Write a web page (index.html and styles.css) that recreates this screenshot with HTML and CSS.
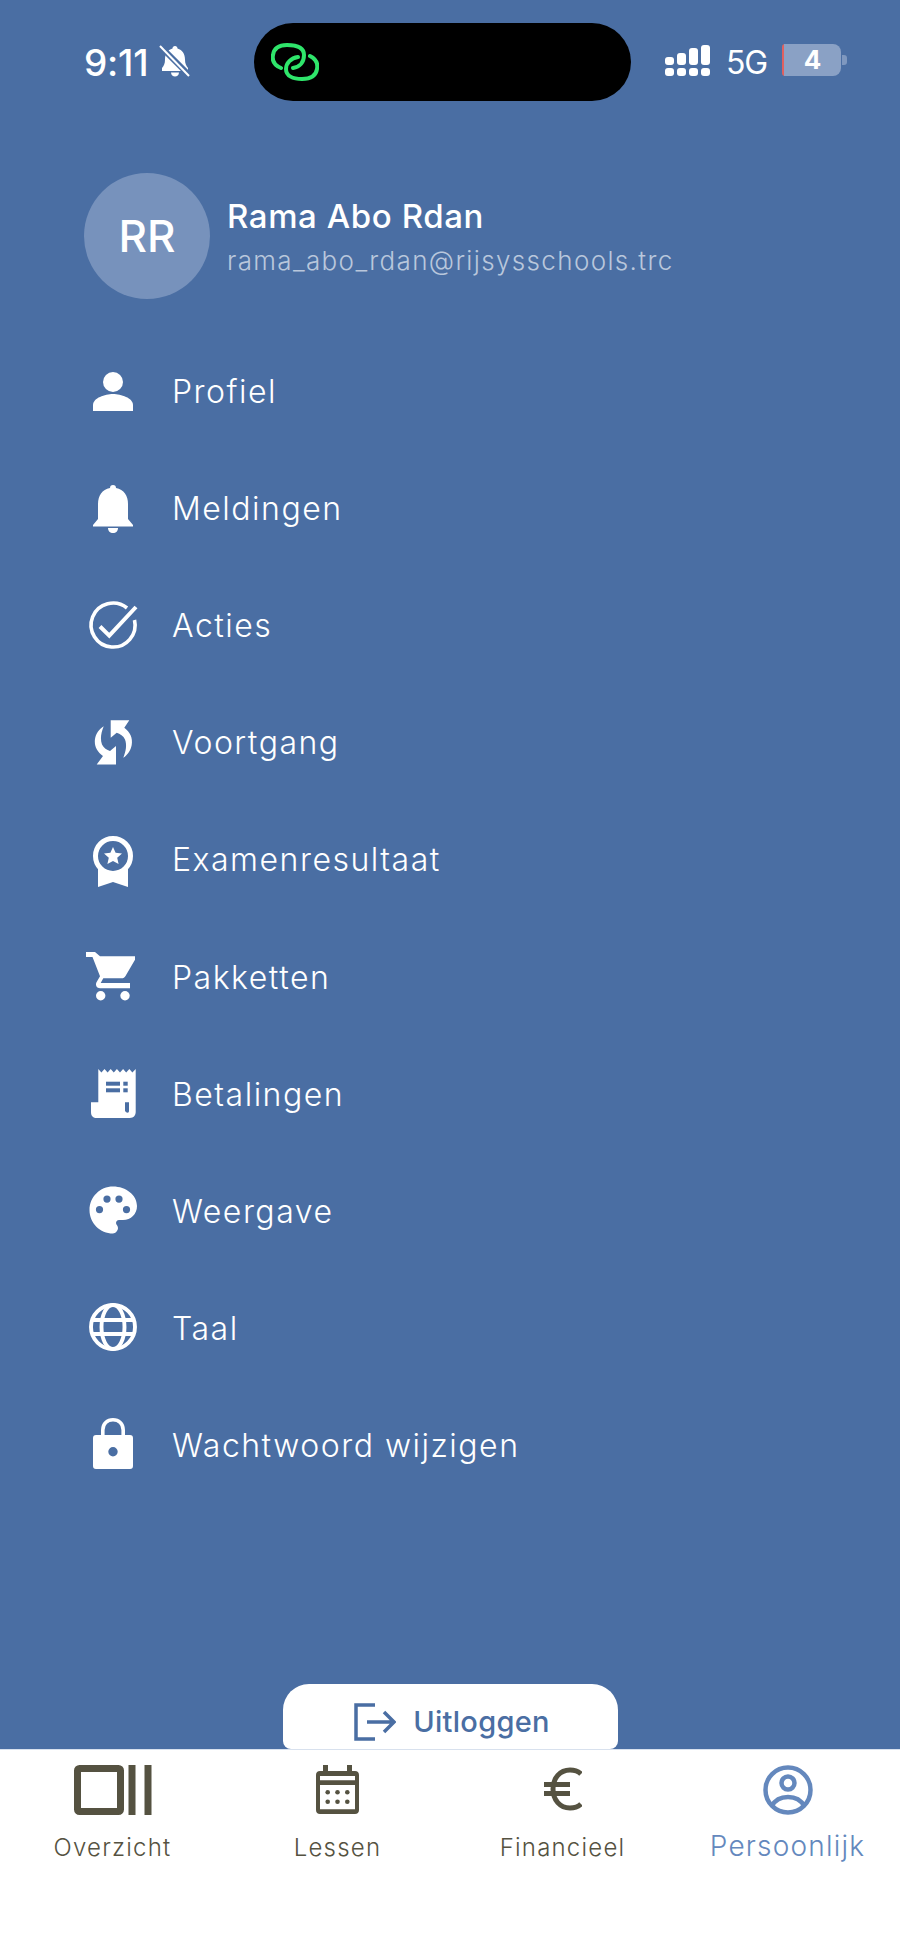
FILE: index.html
```html
<!DOCTYPE html>
<html lang="nl">
<head>
<meta charset="utf-8">
<title>Persoonlijk</title>
<link rel="stylesheet" href="styles.css">
</head>
<body>
<div class="screen">
  <header class="status">
    <div class="status-left">
      <span class="time">9:11</span>
      <svg class="mute" viewBox="0 0 30 32" width="30" height="32"><path fill="#fff" d="M15 1c1.500 0 2.500 1 2.500 2.500 5 1.500 7.500 5.500 7.500 11 0 4 1 6 3 8.500V26H2v-3c2-2.500 3-4.500 3-8.500 0-5.500 2.500-9.500 7.500-11C12.500 2 13.500 1 15 1z"/><path fill="#fff" d="M11 27.500h8c0 2.500-2 4-4 4s-4-1.500-4-4z"/><path stroke="#4a6ea3" stroke-width="6" d="M0 1l30 30"/><path stroke="#fff" stroke-width="2" d="M0 1l29 30"/></svg>
    </div>
    <div class="island">
      <svg class="link" viewBox="0 0 48 38" width="48" height="38" fill="none" stroke="#2fe56b" stroke-width="4" stroke-linecap="round"><path d="M10 25C3 22 1 17 2 12 3 5 8 2 16 2c10 0 17 3 17 10 0 7-4 12-11 13"/><path d="M39 13c6 3 8 8 7 13-1 7-6 10-15 10-9 0-16-3-16-10 0-6 5-11 12-12"/></svg>
    </div>
    <div class="status-right">
      <div class="signal">
        <span class="bar b1"></span><span class="bar b2"></span><span class="bar b3"></span><span class="bar b4"></span>
      </div>
      <span class="net">5G</span>
      <div class="battery"><span class="batt-level">4</span><span class="batt-tip"></span></div>
    </div>
  </header>

  <section class="user">
    <div class="avatar">RR</div>
    <div class="user-info">
      <div class="user-name">Rama Abo Rdan</div>
      <div class="user-mail">rama_abo_rdan@rijsysschools.trc</div>
    </div>
  </section>

  <nav class="menu">
    <a class="row"><span class="ico"><svg viewBox="0 0 48 48" width="48" height="48" fill="#fff"><circle cx="24" cy="15" r="10"/><path d="M4 44v-6C4 31 16 27 24 27s20 4 20 11v6z"/></svg></span><span class="label">Profiel</span></a>
    <a class="row"><span class="ico"><svg viewBox="0 0 48 48" width="48" height="48" fill="#fff"><path d="M24 1c2 0 3 1 3 3 8 1.500 12 8 12 16v15l5 6v1.500H4V41l5-6V20c0-8 4-14.500 12-16 0-2 1-3 3-3z"/><path d="M19 44h10c0 3-2 5-5 5s-5-2-5-5z"/></svg></span><span class="label">Meldingen</span></a>
    <a class="row"><span class="ico"><svg viewBox="0 0 48 48" width="48" height="48" fill="none" stroke="#fff" stroke-width="3.600"><path d="M38 7A22 22 0 1 0 45.500 19"/><path d="M11 25.500l9.300 9.200L47 6" stroke-width="4"/></svg></span><span class="label">Acties</span></a>
    <a class="row"><span class="ico"><svg viewBox="0 0 48 48" width="48" height="48" fill="#fff"><path d="M21.700 2.200H40.300l-5 7.600C41 14 44 20 42.700 27c-.8 5-4 10-8.400 12.800C37 33 38 27 36 21.500 34.500 18 31 16 27.700 14.800l-6 5z"/><path d="M27 46.500H7.700l6.300-8.500C8 34 5 28 6 21c.8-5 4-10 8.700-12.800C12 15 11 21 13 26.500 14.500 30 18 32 21 33l6-5z"/></svg></span><span class="label">Voortgang</span></a>
    <a class="row"><span class="ico"><svg viewBox="0 0 48 48" width="48" height="48" fill="#fff"><path d="M9 30h30v22l-15-5-15 5z"/><circle cx="24" cy="21" r="17.500" fill="#4a6ea3" stroke="#fff" stroke-width="5"/><path d="M24 12l2.600 5.800 6.400.7-4.800 4.300 1.400 6.300L24 25.900l-5.600 3.200 1.400-6.300-4.800-4.300 6.400-.7z"/></svg></span><span class="label">Examenresultaat</span></a>
    <a class="row"><span class="ico"><svg viewBox="0 0 48 48" width="48" height="48" fill="#fff"><path d="M-3 0H6l5 4.300h35v3.400L36.500 24c-1 1.800-2 2.300-4 2.300H14.300L11.700 31H41v5.300H11c-3 0-5-3-3.500-6l3.500-6L3.500 5H-3z"/><circle cx="11.700" cy="43.700" r="4.700"/><circle cx="36" cy="43.700" r="4.700"/></svg></span><span class="label">Pakketten</span></a>
    <a class="row"><span class="ico"><svg viewBox="0 0 48 48" width="48" height="48" fill="#fff"><path d="M9.300 0l3.100 3.500L15.500 0l3.100 3.500L21.700 0l3.100 3.500L27.900 0 31 3.500 34.100 0l3.100 3.500L40.300 0l3.100 3.500L46.700 0v43c0 3-2 6-6 6H8c-4 0-6-2-6-6v-9.700h7.300z"/><g fill="#4a6ea3"><rect x="17" y="12.700" width="14" height="4"/><rect x="34.300" y="12.700" width="4.400" height="4"/><rect x="17" y="19.300" width="14" height="4"/><rect x="34.300" y="19.300" width="4.400" height="4"/><path d="M36 33.300h4v8.200c0 1.500-.5 2.200-1.500 2.200s-2.500-1-2.500-2.500z"/></g></svg></span><span class="label">Betalingen</span></a>
    <a class="row"><span class="ico"><svg viewBox="0 0 48 48" width="48" height="48" fill="#fff"><path fill-rule="evenodd" d="M24 .5C37 .5 48 9 48 20c0 8-6 14-14 14h-4c-2 0-3 1.500-3 3 0 2 2 2.500 2 5s-2.500 5.500-5 5.500C11 47.500.5 37 .5 24S11 .5 24 .5zM10.500 20a3.600 3.600 0 1 0 0 7.200 3.600 3.600 0 0 0 0-7.200zM18 9.500a3.600 3.600 0 1 0 0 7.200 3.600 3.600 0 0 0 0-7.200zM30 9.500a3.600 3.600 0 1 0 0 7.200 3.600 3.600 0 0 0 0-7.200zM37.500 20a3.600 3.600 0 1 0 0 7.200 3.600 3.600 0 0 0 0-7.200z"/></svg></span><span class="label">Weergave</span></a>
    <a class="row"><span class="ico"><svg viewBox="0 0 48 48" width="48" height="48" fill="none" stroke="#fff" stroke-width="3.900"><circle cx="24" cy="24" r="22"/><ellipse cx="24" cy="24" rx="11.500" ry="22"/><path d="M4 17h40M4 31h40"/></svg></span><span class="label">Taal</span></a>
    <a class="row"><span class="ico"><svg viewBox="0 0 48 48" width="48" height="48" fill="#fff"><path fill="none" stroke="#fff" stroke-width="3.600" d="M13.800 17v-7c0-6.500 4.500-10.200 10.200-10.200S34.200 3.500 34.200 10v7"/><path fill-rule="evenodd" d="M7 15h34c2 0 3 1 3 3v28c0 2-1 3-3 3H7c-2 0-3-1-3-3V18c0-2 1-3 3-3zm17 12a4.700 4.700 0 1 0 0 9.400 4.700 4.700 0 0 0 0-9.400z"/></svg></span><span class="label">Wachtwoord wijzigen</span></a>
  </nav>

  <div class="logout-wrap">
    <a class="logout">
      <svg viewBox="0 0 42 38" width="42" height="38" fill="none" stroke="#4a6ea3" stroke-width="3.500"><path d="M21 2H2v34h19"/><path d="M13 19h27M30 9l10 10-10 10"/></svg>
      <span>Uitloggen</span>
    </a>
  </div>

  <footer class="tabs">
    <a class="tab">
      <svg class="tab-ico" viewBox="0 0 78 50" width="78" height="50" fill="none" stroke="#555241"><rect x="3.500" y="3.500" width="43" height="43" rx="2" stroke-width="7"/><path d="M58 0v50M74 0v50" stroke-width="7"/></svg>
      <span class="tab-label">Overzicht</span>
    </a>
    <a class="tab">
      <svg class="tab-ico" viewBox="0 0 43 50" width="43" height="50" fill="#555241"><path fill-rule="evenodd" d="M7 0h5v6h19V0h5v6h3c2.500 0 4 1.500 4 4v35c0 2.500-1.500 4-4 4H4c-2.500 0-4-1.500-4-4V10c0-2.500 1.500-4 4-4h3zM4 11v4.300h35V11zM4 20v24.300h35V20z"/><circle cx="11.700" cy="27.300" r="2.300"/><circle cx="21.500" cy="27.300" r="2.300"/><circle cx="31.300" cy="27.300" r="2.300"/><circle cx="11.700" cy="36.700" r="2.300"/><circle cx="21.500" cy="36.700" r="2.300"/><circle cx="31.300" cy="36.700" r="2.300"/></svg>
      <span class="tab-label">Lessen</span>
    </a>
    <a class="tab">
      <svg class="tab-ico" viewBox="0 0 38 50" width="38" height="50" fill="none" stroke="#555241" stroke-width="5"><path d="M37 9c-3-3-7-4-11-4C16 5 9 13 9 24s7 19 17 19c4 0 8-1 11-4"/><path d="M0 19.500h26M0 28.500h26"/></svg>
      <span class="tab-label">Financieel</span>
    </a>
    <a class="tab tab-active">
      <svg class="tab-ico" viewBox="0 0 50 50" width="50" height="50" fill="none" stroke="#6488bd" stroke-width="4.500"><circle cx="25" cy="25" r="22.500"/><circle cx="25" cy="18" r="6.500"/><path d="M9 41c3-6 9-9 16-9s13 3 16 9"/></svg>
      <span class="tab-label">Persoonlijk</span>
    </a>
  </footer>
</div>
</body>
</html>
```

FILE: styles.css
```css
* { box-sizing: border-box; }
html, body { margin: 0; padding: 0; }
body { font-family: Inter, "Liberation Sans", sans-serif; background: #4a6ea3; }

.screen {
  width: 900px;
  height: 1950px;
  background: #4a6ea3;
  display: flex;
  flex-direction: column;
  overflow: hidden;
}

/* status bar */
.status {
  height: 101px;
  padding: 23px 0 0 84px;
  display: flex;
  align-items: flex-start;
}
.status-left {
  width: 170px;
  height: 78px;
  display: flex;
  align-items: center;
  gap: 12px;
}
.time { color: #fff; font-size: 37px; font-weight: 500; letter-spacing: -.2px; }
.mute { overflow: visible; margin-top: -2px; }
.island {
  width: 377px;
  height: 78px;
  background: #000;
  border-radius: 39px;
  padding: 20px 0 0 17px;
}
.link { display: block; }
.status-right {
  height: 78px;
  margin-left: 34px;
  display: flex;
  align-items: center;
}
.signal { width: 45px; height: 32px; margin-bottom: 4px; display: flex; align-items: flex-end; gap: 3px; }
.bar { width: 9px; height: 8px; border-radius: 3px; position: relative; background: #fff; }
.bar::before {
  content: ""; position: absolute; left: 0; width: 100%; background: #fff; border-radius: 3px; bottom: 11px;
}
.b1::before { height: 8px; }
.b2::before { height: 12px; }
.b3::before { height: 17px; }
.b4::before { height: 20px; }
.net { color: #fff; font-size: 32px; font-weight: 400; margin-left: 16px; width: 56px; letter-spacing: -1.200px; }
.battery { display: flex; align-items: center; height: 32px; margin-bottom: 4px; border-left: 2px solid #e0605f; border-radius: 3px 0 0 3px; }
.batt-level {
  width: 57px; height: 32px; background: #8aa1c5; border-radius: 0 8px 8px 0;
  color: #fff; font-size: 26px; font-weight: 700; text-align: center; line-height: 32px;
}
.batt-tip { width: 5px; height: 10px; margin-left: 1px; background: #7f98bf; border-radius: 0 3px 3px 0; }

/* user */
.user {
  margin-top: 72px;
  padding-left: 84px;
  display: flex;
  align-items: flex-start;
}
.avatar {
  width: 126px; height: 126px; border-radius: 50%;
  background: #7792bc; color: #fff;
  font-size: 44px; font-weight: 500;
  display: flex; align-items: center; justify-content: center;
}
.user-info { margin-left: 17px; padding-top: 24px; }
.user-name { color: #fff; font-size: 33px; font-weight: 500; line-height: 38px; letter-spacing: .6px; }
.user-mail { color: #b9c7dc; font-size: 26px; font-weight: 300; line-height: 30px; margin-top: 11px; letter-spacing: 1.350px; }

/* menu */
.menu { margin-top: 33px; display: flex; flex-direction: column; }
.row {
  height: 117.100px;
  padding-left: 89px;
  display: flex;
  align-items: center;
  gap: 35px;
  color: #fff;
}
.ico { width: 48px; height: 48px; display: block; }
.ico svg { display: block; overflow: visible; }
.label { font-size: 32px; font-weight: 350; letter-spacing: 1.500px; padding-top: 2px; }

/* logout */
.logout-wrap { margin-top: auto; display: flex; justify-content: center; }
.logout {
  width: 335px; height: 65px;
  background: #fff;
  border-radius: 26px 26px 8px 8px;
  color: #4a6ea3;
  display: flex; align-items: flex-start; justify-content: center; gap: 17px;
  padding: 19px 0 0 4px;
  font-size: 29px; font-weight: 450; letter-spacing: .3px;
}
.logout svg { display: block; }
.logout span { line-height: 38px; }

/* tabs */
.tabs {
  height: 201px;
  background: #fff;
  display: grid;
  grid-template-columns: repeat(4, 225px);
  padding-top: 15px;
  border-top: 1px solid #d8e1ee;
}
.tab {
  display: flex; flex-direction: column; align-items: center;
  color: #555241;
  font-size: 24px;
  font-weight: 300;
  letter-spacing: 1.200px;
}
.tab-ico { display: block; }
.tab-label { margin-top: 18px; line-height: 30px; }
.tab-active { color: #6488bd; }
.tab-active .tab-label { font-size: 28px; margin-top: 14px; line-height: 34px; }
```
